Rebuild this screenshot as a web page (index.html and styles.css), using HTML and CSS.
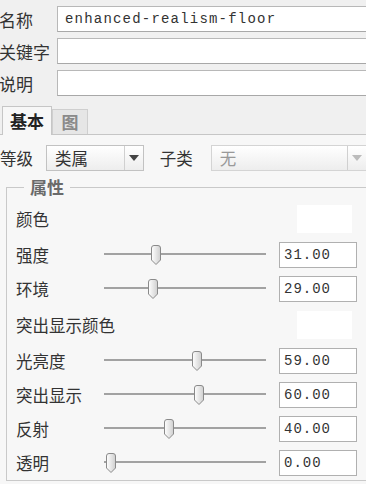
FILE: index.html
```html
<!DOCTYPE html>
<html lang="zh-CN">
<head>
  <meta charset="UTF-8" />
  <title>材质</title>
  <link rel="stylesheet" href="styles.css">
</head>
<body>
  <div class="fields">
    <div class="field">
      <span class="field-label">名称</span>
      <div class="text-box mono">enhanced-realism-floor</div>
    </div>
    <div class="field">
      <span class="field-label">关键字</span>
      <div class="text-box mono"></div>
    </div>
    <div class="field">
      <span class="field-label">说明</span>
      <div class="text-box mono"></div>
    </div>
  </div>

  <div class="tabs">
    <div class="tab active">基本</div>
    <div class="tab">图</div>
  </div>

  <div class="tab-body">
    <div class="combo-row">
      <span class="combo-label">等级</span>
      <div class="combo level">
        <span class="combo-text">类属</span>
        <span class="combo-btn"><i class="arrow"></i></span>
      </div>
      <span class="combo-label sub">子类</span>
      <div class="combo subclass disabled">
        <span class="combo-text">无</span>
        <span class="combo-btn"><i class="arrow"></i></span>
      </div>
    </div>

    <fieldset class="group">
      <legend>属性</legend>

      <div class="prop-row color-row">
        <span class="prop-label">颜色</span>
        <span></span>
        <div class="swatch"></div>
      </div>

      <div class="prop-row">
        <span class="prop-label">强度</span>
        <div class="slider"><svg class="thumb" style="left:46px" width="12" height="22" viewBox="0 0 12 22"><use href="#thumb"/></svg></div>
        <div class="num-box mono">31.00</div>
      </div>

      <div class="prop-row">
        <span class="prop-label">环境</span>
        <div class="slider"><svg class="thumb" style="left:43px" width="12" height="22" viewBox="0 0 12 22"><use href="#thumb"/></svg></div>
        <div class="num-box mono">29.00</div>
      </div>

      <div class="prop-row color-row">
        <span class="prop-label">突出显示颜色</span>
        <span></span>
        <div class="swatch"></div>
      </div>

      <div class="prop-row">
        <span class="prop-label">光亮度</span>
        <div class="slider"><svg class="thumb" style="left:87px" width="12" height="22" viewBox="0 0 12 22"><use href="#thumb"/></svg></div>
        <div class="num-box mono">59.00</div>
      </div>

      <div class="prop-row">
        <span class="prop-label">突出显示</span>
        <div class="slider"><svg class="thumb" style="left:89px" width="12" height="22" viewBox="0 0 12 22"><use href="#thumb"/></svg></div>
        <div class="num-box mono">60.00</div>
      </div>

      <div class="prop-row">
        <span class="prop-label">反射</span>
        <div class="slider"><svg class="thumb" style="left:59px" width="12" height="22" viewBox="0 0 12 22"><use href="#thumb"/></svg></div>
        <div class="num-box mono">40.00</div>
      </div>

      <div class="prop-row">
        <span class="prop-label">透明</span>
        <div class="slider"><svg class="thumb" style="left:1px" width="12" height="22" viewBox="0 0 12 22"><use href="#thumb"/></svg></div>
        <div class="num-box mono">0.00</div>
      </div>
    </fieldset>
  </div>

  <svg width="0" height="0" class="defs">
    <defs>
      <linearGradient id="thumbFill" x1="0" y1="0" x2="1" y2="0">
        <stop offset="0" stop-color="#ffffff"/>
        <stop offset="1" stop-color="#cfcfcf"/>
      </linearGradient>
      <symbol id="thumb" viewBox="0 0 12 22">
        <path d="M1.5 4 Q1.5 1.5 4 1.5 H8 Q10.5 1.5 10.5 4 V16 L6 20.5 L1.5 16 Z" fill="url(#thumbFill)" stroke="#8a8a8a" stroke-width="1"/>
      </symbol>
    </defs>
  </svg>
</body>
</html>
```

FILE: styles.css
```css
body {
  margin: 0;
  background-color: #f0f0f0;
  font-family: "Noto Sans CJK SC", "Noto Sans", sans-serif;
  font-size: 16.5px;
  color: #333;
  overflow: hidden;
}
.mono {
  font-family: "Liberation Mono", "DejaVu Sans Mono", monospace;
  font-size: 14px;
  letter-spacing: 1.2px;
  color: #333;
}
.defs {
  position: absolute;
}

/* top fields */
.fields {
  display: flex;
  flex-direction: column;
  gap: 6px;
  padding-top: 6px;
}
.field {
  display: flex;
  align-items: center;
  height: 26px;
}
.field-label {
  width: 58px;
  flex-shrink: 0;
  font-size: 17px;
  margin-left: -1px;
}
.text-box {
  flex: 1;
  height: 24px;
  line-height: 24px;
  margin-right: -20px;
  padding-left: 7px;
  background: #fff;
  border: 1px solid #b8b8b8;
  border-bottom-color: #a8a8a8;
}

/* tabs */
.tabs {
  display: flex;
  align-items: flex-end;
  height: 28px;
  margin-top: 10px;
  padding-left: 2px;
  border-bottom: 1px solid #c6c6c6;
}
.tab {
  box-sizing: border-box;
  height: 25px;
  width: 36px;
  line-height: 23px;
  text-align: center;
  font-weight: bold;
  font-size: 17px;
  color: #8a8a8a;
  background: #e6e6e6;
  border: 1px solid #cfcfcf;
  border-bottom: none;
}
.tab.active {
  width: 50px;
  height: 29px;
  line-height: 27px;
  margin-bottom: -1px;
  color: #222;
  background: #f7f7f7;
  border-color: #c6c6c6;
}

.tab-body {
  background: #f7f7f7;
  height: 400px;
}

/* combos */
.combo-row {
  display: flex;
  align-items: center;
  height: 26px;
  padding-top: 10px;
}
.combo-label {
  width: 46px;
  flex-shrink: 0;
}
.combo-label.sub {
  width: 51px;
  margin-left: 16px;
}
.combo {
  box-sizing: border-box;
  display: flex;
  height: 26px;
  border: 1px solid #c2c2c2;
  background: linear-gradient(#ffffff, #ededed);
}
.combo.level {
  width: 99px;
}
.combo.subclass {
  width: 157px;
  border-color: #d4d4d4;
  border-right: none;
}
.combo-text {
  flex: 1;
  line-height: 24px;
  padding-left: 8px;
}
.combo.disabled .combo-text {
  color: #999;
}
.combo-btn {
  width: 18px;
  display: flex;
  align-items: center;
  justify-content: center;
  border-left: 1px solid #d0d0d0;
}
.arrow {
  width: 0;
  height: 0;
  border-left: 5px solid transparent;
  border-right: 5px solid transparent;
  border-top: 6px solid #444;
}
.combo.disabled .arrow {
  border-top-color: #bbb;
}

/* group */
.group {
  margin: 5px -20px 0 6px;
  padding: 2px 0 0 9px;
  border: 1px solid #c9c9c9;
  border-right: none;
  min-width: 0;
}
.group legend {
  margin-left: 8px;
  padding: 0 6px;
  line-height: 22px;
  font-size: 17px;
  font-weight: bold;
  color: #6a6a6a;
}
.prop-row {
  display: grid;
  grid-template-columns: 77px 164px 78px;
  column-gap: 11px;
  align-items: center;
  height: 34px;
}
.prop-row.color-row {
  height: 38px;
}
.prop-label {
  white-space: nowrap;
}
.swatch {
  width: 55px;
  height: 28px;
  margin-left: 18px;
  background: #fff;
}
.slider {
  position: relative;
  height: 22px;
}
.slider::before {
  content: "";
  position: absolute;
  left: 0;
  right: 2px;
  top: 9px;
  height: 2px;
  background: #a2a2a2;
}
.thumb {
  position: absolute;
  top: 0;
}
.num-box {
  box-sizing: border-box;
  height: 26px;
  line-height: 24px;
  padding-left: 4px;
  background: #fff;
  border: 1px solid #b0b0b0;
  letter-spacing: 1px;
}
```
